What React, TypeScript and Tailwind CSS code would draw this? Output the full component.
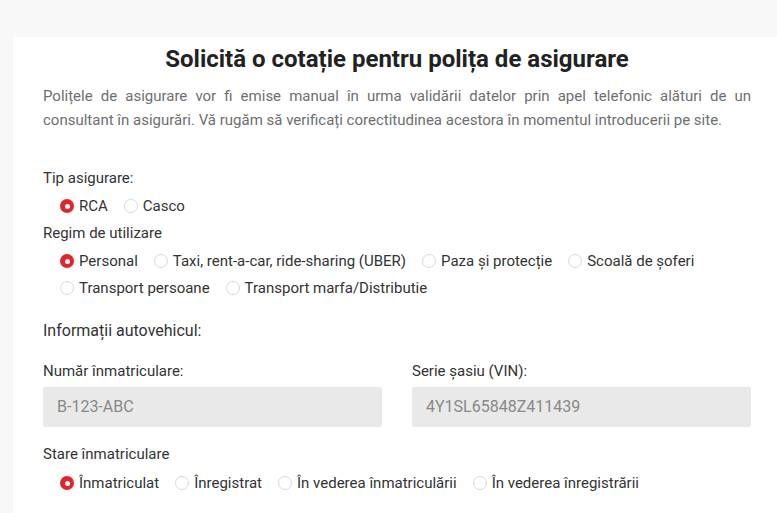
import React from "react";

function Radio({ label, checked }: { label: string; checked?: boolean }) {
  return (
    <label className="flex items-center gap-[5px] h-5">
      {checked ? (
        <span className="w-[14px] h-[14px] rounded-full bg-[#e0262b] flex items-center justify-center">
          <span className="w-[5px] h-[5px] rounded-full bg-white" />
        </span>
      ) : (
        <span className="w-[14px] h-[14px] rounded-full border border-[#d9d9d9] bg-white" />
      )}
      <span className="text-[15px] leading-5 text-[#333]">{label}</span>
    </label>
  );
}

export default function App() {
  return (
    <div
      className="w-[777px] h-[513px] overflow-hidden bg-[#f8f8f8] pt-[37px]"
      style={{ fontFamily: "Roboto, 'Liberation Sans', sans-serif" }}
    >
      <div className="ml-[13px] w-[768px] h-[600px] bg-white px-[30px] pt-[7px]">
        <h1 className="text-center text-[24px] leading-[30px] font-bold text-[#222]">
          Solicită o cotație pentru polița de asigurare
        </h1>
        <p className="mt-[10px] text-[15px] leading-6 text-[#6e6e6e] text-justify">
          Polițele de asigurare vor fi emise manual în urma validării datelor prin apel telefonic alături de un consultant în asigurări. Vă rugăm să verificați corectitudinea acestora în momentul introducerii pe site.
        </p>

        <div className="mt-[36px] text-[15px] leading-5 text-[#333]">Tip asigurare:</div>
        <div className="mt-[8px] ml-[17px] flex gap-x-4">
          <Radio label="RCA" checked />
          <Radio label="Casco" />
        </div>

        <div className="mt-[7px] text-[15px] leading-5 text-[#333]">Regim de utilizare</div>
        <div className="mt-[8px] ml-[17px] flex flex-wrap gap-x-4 gap-y-[7px] w-[660px]">
          <Radio label="Personal" checked />
          <Radio label="Taxi, rent-a-car, ride-sharing (UBER)" />
          <Radio label="Paza și protecție" />
          <Radio label="Scoală de șoferi" />
          <Radio label="Transport persoane" />
          <Radio label="Transport marfa/Distributie" />
        </div>

        <div className="mt-[22px] text-[16px] leading-[22px] text-[#333]">Informații autovehicul:</div>

        <div className="mt-[19px] grid grid-cols-2 gap-x-[30px]">
          <div>
            <div className="text-[15px] leading-5 text-[#333]">Număr înmatriculare:</div>
            <div className="mt-[6px] h-10 bg-[#e9e9e9] rounded-[2px] px-[14px] flex items-center text-[16px] text-[#888]">
              B-123-ABC
            </div>
          </div>
          <div>
            <div className="text-[15px] leading-5 text-[#333]">Serie șasiu (VIN):</div>
            <div className="mt-[6px] h-10 bg-[#e9e9e9] rounded-[2px] px-[14px] flex items-center text-[16px] text-[#888]">
              4Y1SL65848Z411439
            </div>
          </div>
        </div>

        <div className="mt-[17px] text-[15px] leading-5 text-[#333]">Stare înmatriculare</div>
        <div className="mt-[9px] ml-[17px] flex gap-x-4">
          <Radio label="Înmatriculat" checked />
          <Radio label="Înregistrat" />
          <Radio label="În vederea înmatriculării" />
          <Radio label="În vederea înregistrării" />
        </div>
      </div>
    </div>
  );
}
